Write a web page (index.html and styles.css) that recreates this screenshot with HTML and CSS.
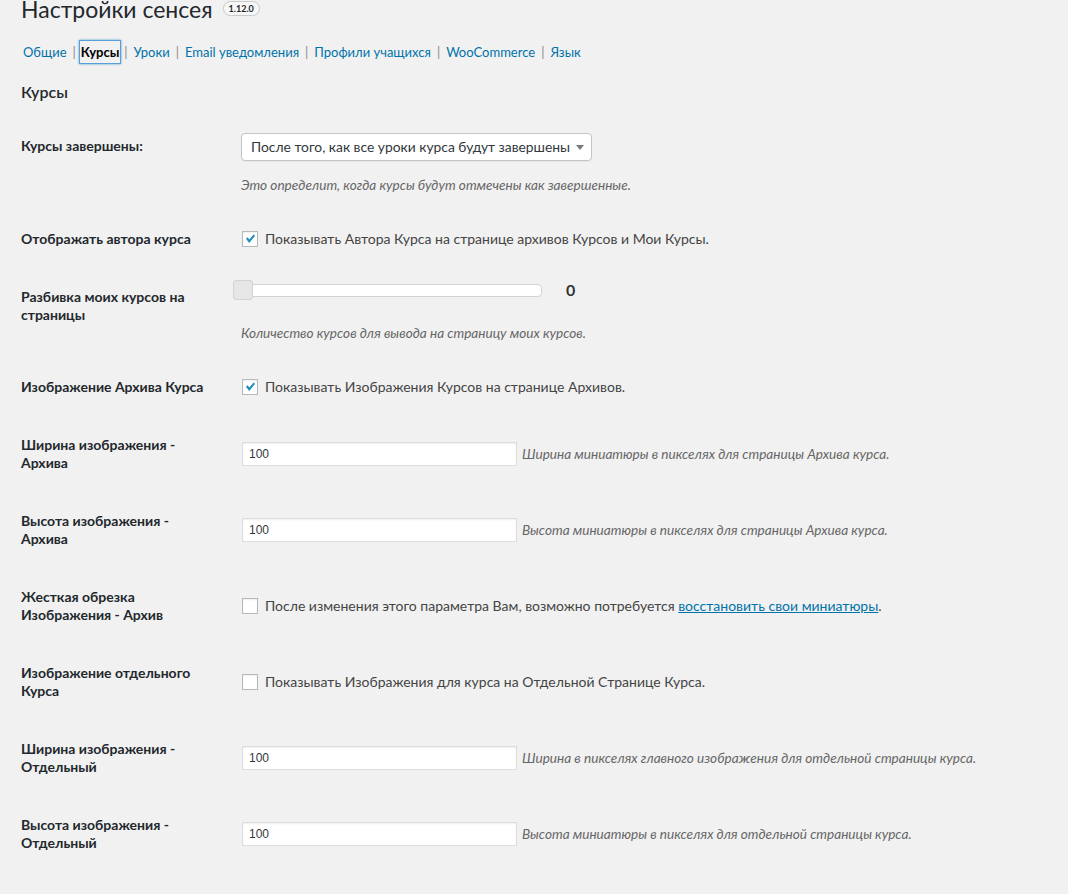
FILE: index.html
```html
<!DOCTYPE html>
<html lang="ru">
<head>
<meta charset="utf-8">
<title>Настройки сенсея</title>
<link rel="stylesheet" href="styles.css">
</head>
<body>
<div class="wrap">
  <h1 class="title">Настройки сенсея <span class="version">1.12.0</span></h1>
  <ul class="subnav">
    <li><a href="#">Общие</a><span class="sep">|</span></li>
    <li><a href="#" class="current">Курсы</a><span class="sep">|</span></li>
    <li><a href="#">Уроки</a><span class="sep">|</span></li>
    <li><a href="#">Email уведомления</a><span class="sep">|</span></li>
    <li><a href="#">Профили учащихся</a><span class="sep">|</span></li>
    <li><a href="#">WooCommerce</a><span class="sep">|</span></li>
    <li><a href="#">Язык</a></li>
  </ul>
  <h2 class="section">Курсы</h2>

  <div class="form-table">
    <div class="row">
      <div class="th">Курсы завершены:</div>
      <div class="td td-stack">
        <div class="select">После того, как все уроки курса будут завершены<span class="arrow"></span></div>
        <p class="description block">Это определит, когда курсы будут отмечены как завершенные.</p>
      </div>
    </div>

    <div class="row">
      <div class="th">Отображать автора курса</div>
      <div class="td">
        <label class="check"><span class="box checked"><svg viewBox="0 0 16 16" width="16" height="16"><path d="M3.4 7.7 L5.3 6 L7.2 8.6 L12.4 2.6 L13.6 4.6 L7.1 12.6 Z" fill="#1e8cbe"/></svg></span>Показывать Автора Курса на странице архивов Курсов и Мои Курсы.</label>
      </div>
    </div>

    <div class="row">
      <div class="th">Разбивка моих курсов на страницы</div>
      <div class="td td-stack">
        <div class="slider-row">
          <div class="slider"><span class="handle"></span></div>
          <span class="slider-value">0</span>
        </div>
        <p class="description block slider-desc">Количество курсов для вывода на страницу моих курсов.</p>
      </div>
    </div>

    <div class="row">
      <div class="th">Изображение Архива Курса</div>
      <div class="td">
        <label class="check"><span class="box checked"><svg viewBox="0 0 16 16" width="16" height="16"><path d="M3.4 7.7 L5.3 6 L7.2 8.6 L12.4 2.6 L13.6 4.6 L7.1 12.6 Z" fill="#1e8cbe"/></svg></span>Показывать Изображения Курсов на странице Архивов.</label>
      </div>
    </div>

    <div class="row">
      <div class="th">Ширина изображения - Архива</div>
      <div class="td">
        <span class="input">100</span><span class="description">Ширина миниатюры в пикселях для страницы Архива курса.</span>
      </div>
    </div>

    <div class="row">
      <div class="th">Высота изображения - Архива</div>
      <div class="td">
        <span class="input">100</span><span class="description">Высота миниатюры в пикселях для страницы Архива курса.</span>
      </div>
    </div>

    <div class="row">
      <div class="th">Жесткая обрезка Изображения - Архив</div>
      <div class="td">
        <label class="check"><span class="box"></span>После изменения этого параметра Вам, возможно потребуется&nbsp;<a href="#" class="link">восстановить свои миниатюры</a>.</label>
      </div>
    </div>

    <div class="row">
      <div class="th">Изображение отдельного Курса</div>
      <div class="td">
        <label class="check"><span class="box"></span>Показывать Изображения для курса на Отдельной Странице Курса.</label>
      </div>
    </div>

    <div class="row">
      <div class="th">Ширина изображения - Отдельный</div>
      <div class="td">
        <span class="input">100</span><span class="description">Ширина в пикселях главного изображения для отдельной страницы курса.</span>
      </div>
    </div>

    <div class="row">
      <div class="th">Высота изображения - Отдельный</div>
      <div class="td">
        <span class="input">100</span><span class="description">Высота миниатюры в пикселях для отдельной страницы курса.</span>
      </div>
    </div>
  </div>
</div>
</body>
</html>
```

FILE: styles.css
```css
html, body {
  margin: 0;
  padding: 0;
  background: #f1f1f1;
}
body {
  font-family: "Lato", "Open Sans", sans-serif;
  color: #444;
  font-size: 13px;
  overflow: hidden;
  height: 894px;
}
.wrap {
  padding-left: 21px;
}
.title {
  margin: -5px 0 0;
  font-size: 23px;
  line-height: 29px;
  font-weight: 400;
  color: #23282d;
  display: flex;
  align-items: flex-start;
}
.version {
  margin-left: 10px;
  margin-top: 6px;
  font-size: 9px;
  font-weight: 700;
  line-height: 13px;
  padding: 0 5px;
  border: 1px solid #c8c8c8;
  border-radius: 8px;
  background: #f7f7f7;
  color: #23282d;
}
.subnav {
  list-style: none;
  margin: 16px 0 0;
  padding: 0 0 0 2px;
  display: flex;
  align-items: center;
  height: 24px;
  font-size: 13px;
}
.subnav li {
  display: flex;
  align-items: center;
}
.subnav a {
  color: #0073aa;
  text-decoration: none;
  line-height: 22px;
}
.subnav a.current {
  color: #000;
  font-weight: 700;
  border: 1px solid #5b9dd9;
  box-shadow: 0 0 2px rgba(30, 140, 190, 0.8);
  padding: 0 1px;
  margin: 0 -3px;
}
.sep {
  color: #8a8a8a;
  margin: 0 6px;
}
.section {
  margin: 17px 0 14px;
  font-size: 16px;
  line-height: 22px;
  font-weight: 600;
  color: #23282d;
}
.form-table {
  display: flex;
  flex-direction: column;
}
.row {
  display: flex;
}
.th {
  width: 220px;
  flex: none;
  box-sizing: border-box;
  padding: 20px 30px 20px 0;
  font-size: 14px;
  line-height: 18px;
  font-weight: 700;
  color: #23282d;
}
.td {
  flex: 1;
  display: flex;
  align-items: center;
  padding: 15px 0;
}
.td-stack {
  flex-direction: column;
  align-items: flex-start;
}
.select {
  margin: 1px 0;
  box-sizing: border-box;
  width: 351px;
  height: 28px;
  border: 1px solid #c4c4c4;
  border-radius: 4px;
  background: #fff;
  font-size: 13.85px;
  line-height: 26px;
  padding-left: 9px;
  color: #32373c;
  position: relative;
  box-shadow: 0 1px 1px rgba(0, 0, 0, 0.04);
  white-space: nowrap;
}
.arrow {
  position: absolute;
  right: 7px;
  top: 11px;
  border-left: 4px solid transparent;
  border-right: 4px solid transparent;
  border-top: 5px solid #7a7a7a;
}
.description {
  font-style: italic;
  font-size: 13.6px;
  color: #666;
  line-height: 18px;
  white-space: nowrap;
}
.description.block {
  margin: 14px 0 1px;
}
.slider-row {
  display: flex;
  align-items: center;
  height: 14px;
}
.slider {
  position: relative;
  margin-left: -8px;
  width: 309px;
  height: 13px;
  box-sizing: border-box;
  background: #fff;
  border: 1px solid #d3d3d3;
  border-radius: 4px;
}
.handle {
  position: absolute;
  left: -1px;
  top: -5px;
  width: 20px;
  height: 20px;
  box-sizing: border-box;
  background: #e6e6e6;
  border: 1px solid #d3d3d3;
  border-radius: 3px;
}
.slider-value {
  margin-left: 24px;
  font-size: 16px;
  font-weight: 700;
  color: #333;
  line-height: 16px;
}
.description.slider-desc {
  margin-top: 27px;
}
.check {
  display: flex;
  align-items: center;
  font-size: 14px;
  color: #444;
  line-height: 18px;
  white-space: nowrap;
}
.box {
  width: 16px;
  height: 16px;
  box-sizing: border-box;
  margin: 0 7px 0 1px;
  border: 1px solid #b4b9be;
  background: #fff;
  box-shadow: inset 0 1px 2px rgba(0, 0, 0, 0.07);
  display: flex;
  align-items: center;
  justify-content: center;
  flex: none;
}
.box svg {
  display: block;
}
.link {
  color: #0073aa;
  text-decoration: underline;
}
.input {
  box-sizing: border-box;
  width: 275px;
  height: 24px;
  margin: 0 5px 0 1px;
  border: 1px solid #ddd;
  background: #fff;
  box-shadow: inset 0 1px 2px rgba(0, 0, 0, 0.07);
  font-family: "Liberation Sans", Arial, sans-serif;
  font-size: 12px;
  line-height: 22px;
  padding-left: 6px;
  color: #32373c;
  flex: none;
}
```
